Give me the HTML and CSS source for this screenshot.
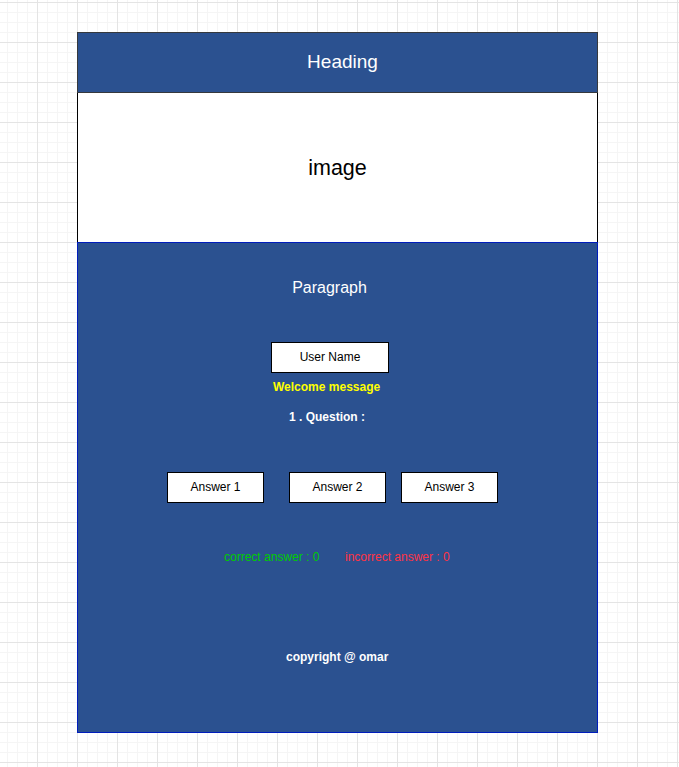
FILE: index.html
```html
<!DOCTYPE html>
<html>
<head>
<meta charset="utf-8">
<link rel="stylesheet" href="styles.css">
</head>
<body>
<div class="frame">
  <div class="header">Heading</div>
  <div class="image">image</div>
  <div class="main">
    <div class="paragraph">Paragraph</div>
    <div class="box username">User Name</div>
    <div class="welcome">Welcome message</div>
    <div class="question">1 . Question :</div>
    <div class="answers">
      <div class="box answer">Answer 1</div>
      <div class="box answer a2">Answer 2</div>
      <div class="box answer a3">Answer 3</div>
    </div>
    <div class="scores">
      <span class="correct">correct answer : 0</span>
      <span class="incorrect">incorrect answer : 0</span>
    </div>
    <div class="copyright">copyright @ omar</div>
  </div>
</div>
</body>
</html>
```
FILE: styles.css
```css
html, body {
  margin: 0;
  padding: 0;
}
body {
  width: 679px;
  height: 767px;
  overflow: hidden;
  font-family: "Liberation Sans", Arial, sans-serif;
  background-color: #ffffff;
  background-image:
    linear-gradient(to right, #e4e4e4 1px, transparent 1px),
    linear-gradient(to bottom, #e4e4e4 1px, transparent 1px),
    linear-gradient(to right, #f5f5f5 1px, transparent 1px),
    linear-gradient(to bottom, #f5f5f5 1px, transparent 1px);
  background-size: 40px 40px, 40px 40px, 10px 10px, 10px 10px;
  background-position: -3px 2px, -3px 2px, 7px 2px, 7px 2px;
}
.frame {
  margin-left: 77px;
  padding-top: 32px;
  width: 521px;
}
.header {
  box-sizing: border-box;
  height: 61px;
  padding-left: 10px;
  background: #2b5190;
  border: 1px solid #36393d;
  color: #ffffff;
  font-size: 19px;
  line-height: 57px;
  text-align: center;
}
.image {
  box-sizing: border-box;
  height: 149px;
  padding-top: 2px;
  background: #ffffff;
  border-left: 1px solid #000000;
  border-right: 1px solid #000000;
  color: #000000;
  font-size: 21.5px;
  line-height: 147px;
  text-align: center;
}
.main {
  box-sizing: border-box;
  height: 491px;
  background: #2b5190;
  border: 1px solid #001dbc;
  color: #ffffff;
  font-size: 12px;
}
.paragraph {
  margin-top: 35px;
  padding-right: 16px;
  font-size: 16px;
  line-height: 20px;
  text-align: center;
}
.box {
  box-sizing: border-box;
  height: 31px;
  background: #ffffff;
  border: 1px solid #000000;
  color: #000000;
  font-size: 12px;
  line-height: 29px;
  text-align: center;
}
.username {
  width: 118px;
  margin-top: 44px;
  margin-left: 193px;
}
.welcome {
  margin-top: 7px;
  margin-left: 195px;
  line-height: 14px;
  font-weight: bold;
  color: #ffff00;
}
.question {
  margin-top: 16px;
  margin-left: 211px;
  line-height: 14px;
  font-weight: bold;
}
.answers {
  display: flex;
  margin-top: 48px;
  margin-left: 89px;
}
.answer {
  width: 97px;
}
.a2 {
  margin-left: 25px;
}
.a3 {
  margin-left: 15px;
}
.scores {
  display: flex;
  margin-top: 47px;
  margin-left: 146px;
  line-height: 14px;
}
.correct {
  color: #00cc00;
  width: 121px;
}
.incorrect {
  color: #ff3344;
}
.copyright {
  margin-top: 86px;
  margin-left: 208px;
  line-height: 14px;
  font-weight: bold;
}
```
